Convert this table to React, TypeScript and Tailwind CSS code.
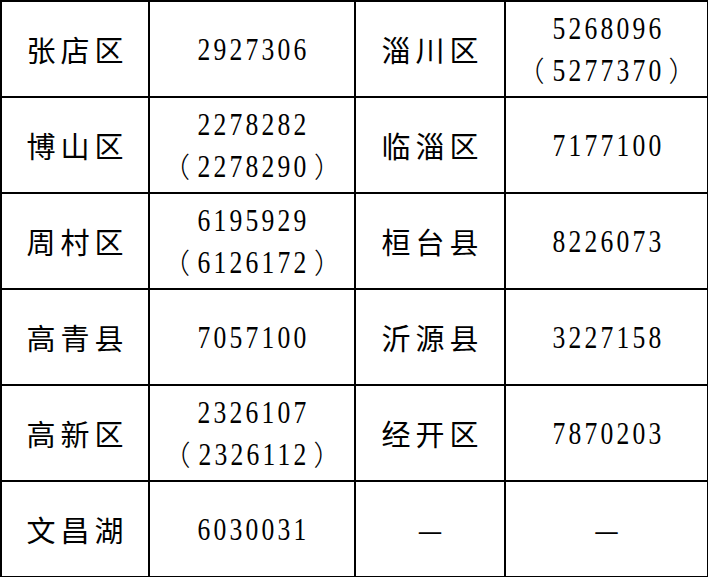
import React from "react";

type Cell = string | string[];

const rows: [string, Cell, string, Cell][] = [
    ["张店区", "2927306", "淄川区", ["5268096", "（5277370）"]],
    ["博山区", ["2278282", "（2278290）"], "临淄区", "7177100"],
    ["周村区", ["6195929", "（6126172）"], "桓台县", "8226073"],
    ["高青县", "7057100", "沂源县", "3227158"],
    ["高新区", ["2326107", "（2326112）"], "经开区", "7870203"],
    ["文昌湖", "6030031", "—", "—"],
];

function NameCell({ text }: { text: string }) {
    return (
        <div className="flex items-center justify-center bg-white">
            <span className="[font-family:'Noto_Sans_CJK_SC',sans-serif] text-[29px] leading-none tracking-[5px] pl-[5px] text-black">
                {text}
            </span>
        </div>
    );
}

function Digits({ text, tight }: { text: string; tight?: boolean }) {
    return (
        <span
            className={
                tight
                    ? "inline-block [font-family:'Liberation_Serif',serif] text-[32px] leading-[42px] tracking-[4px] pl-[4px] text-black scale-x-[0.8] -mx-[10px]"
                    : "inline-block [font-family:'Liberation_Serif',serif] text-[32px] leading-[42px] tracking-[4px] pl-[4px] text-black scale-x-[0.8]"
            }
        >
            {text}
        </span>
    );
}

function NumLine({ text }: { text: string }) {
    if (text.startsWith("（")) {
        return (
            <div className="flex items-center">
                <span className="[font-family:'Noto_Sans_CJK_SC',sans-serif] text-[28px] leading-[42px] font-light text-black">（</span>
                <Digits text={text.slice(1, -1)} tight />
                <span className="[font-family:'Noto_Sans_CJK_SC',sans-serif] text-[28px] leading-[42px] font-light text-black">）</span>
            </div>
        );
    }
    return <Digits text={text} />;
}

function NumCell({ value }: { value: Cell }) {
    const lines = Array.isArray(value) ? value : [value];
    return (
        <div className="flex flex-col items-center justify-center bg-white">
            {lines.map((l) =>
                l === "—" ? (
                    <span key={l} className="[font-family:'Noto_Sans_CJK_SC',sans-serif] text-[28px] leading-none text-black">
                        {l}
                    </span>
                ) : (
                    <NumLine key={l} text={l} />
                )
            )}
        </div>
    );
}

export default function App() {
    return (
        <div className="h-[577px] w-[709px] overflow-hidden bg-white">
            <div className="grid w-[708px] grid-cols-[146px_204px_148px_201px] auto-rows-[94px] gap-[2px] bg-black p-[2px]">
                {rows.map((r, i) => (
                    <React.Fragment key={i}>
                        <NameCell text={r[0]} />
                        <NumCell value={r[1]} />
                        {r[2] === "—" ? <NumCell value="—" /> : <NameCell text={r[2]} />}
                        <NumCell value={r[3]} />
                    </React.Fragment>
                ))}
            </div>
        </div>
    );
}
